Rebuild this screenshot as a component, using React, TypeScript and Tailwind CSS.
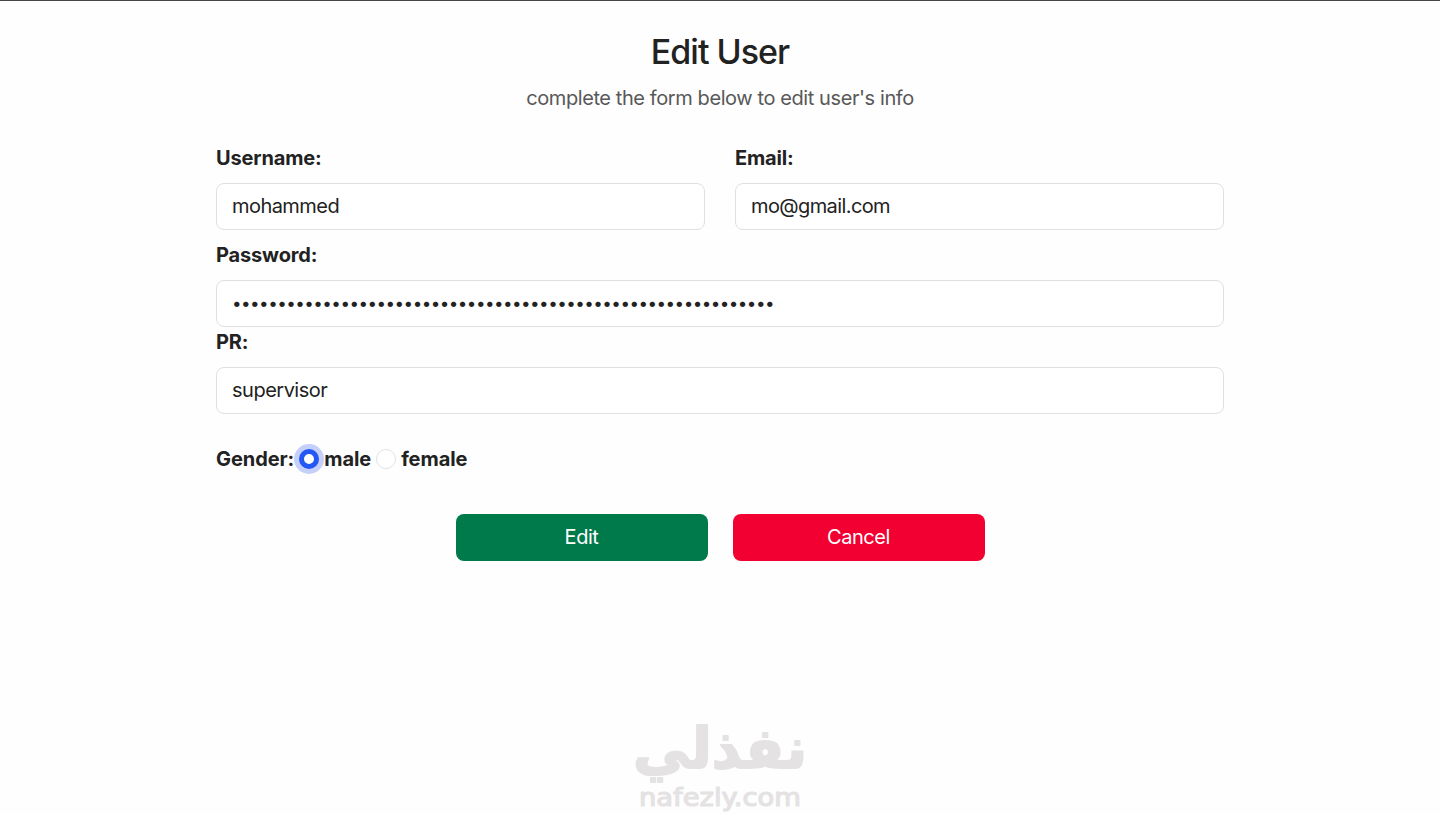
import { useState } from "react"

interface fieldProps {
    label: string,
    name: string,
    type: string,
    value: string,
    className: string
}

function Field(props: fieldProps) {
    const [value, setValue] = useState(props.value)
    return (
        <label className="block w-full">
            <span className="block h-[30px] leading-[30px] mb-2.5 font-bold tracking-[-0.15px]">{props.label}</span>
            <input
                className={`block w-full h-[47px] px-[15px] pb-0.5 border border-[#dee0e2] rounded-lg bg-white outline-none ${props.className}`}
                type={props.type}
                name={props.name}
                value={value}
                onChange={e => setValue(e.target.value)}
            />
        </label>
    )
}

function Watermark() {
    return (
        <svg className="w-[180px] h-[100px] overflow-visible fill-[#e4e2e3] stroke-[#e4e2e3]" viewBox="0 -6 180 100" strokeLinejoin="round" aria-label="nafezly">
            <text x="177" y="49" direction="rtl" textLength="174" lengthAdjust="spacingAndGlyphs" className="font-['DejaVu_Sans'] font-bold text-[56px]" strokeWidth="2">نفذلي</text>
            <text x="9" y="87" textLength="162" lengthAdjust="spacingAndGlyphs" className="font-['DejaVu_Sans'] text-[25px]" strokeWidth="1.2">nafezly.com</text>
        </svg>
    )
}

export default function App() {
    const [gender, setGender] = useState("male")
    return (
        <main className="w-full h-[814px] overflow-hidden flex flex-col items-center border-t border-[#454545] bg-[#fefefe] font-[Inter,sans-serif] text-xl text-[#222]">
            <h1 className="mt-[30px] h-[42px] leading-[42px] text-[34px] font-medium tracking-[-1px]">Edit User</h1>
            <p className="mt-2.5 h-[30px] leading-[30px] tracking-[-0.41px] text-[#585858]">complete the form below to edit user's info</p>

            <form className="w-[70%] mt-[30px]">
                <div className="flex gap-[30px] mb-2.5">
                    <Field label="Username:" name="username" type="text" value="mohammed" className="tracking-[-0.55px]" />
                    <Field label="Email:" name="email" type="text" value="mo@gmail.com" className="tracking-[-0.6px]" />
                </div>
                <Field label="Password:" name="password" type="password" value={"x".repeat(60)} className="text-[17px] tracking-[-0.53px]" />
                <Field label="PR:" name="pr" type="text" value="supervisor" className="tracking-[-0.5px]" />

                <div className="flex items-center h-[30px] mt-[30px] font-bold tracking-[-0.07px]">
                    <span>Gender:</span>
                    {["male", "female"].map(item => (
                        <label key={item} className="flex items-center">
                            <input
                                className="appearance-none size-5 mx-[5px] rounded-full border border-[#e0e2e4] bg-white checked:border-[5.5px] checked:border-[#2557f5] checked:ring-[5px] checked:ring-[#c5d0fa]"
                                type="radio"
                                name="gender"
                                checked={gender === item}
                                onChange={() => setGender(item)}
                            />
                            {item}
                        </label>
                    ))}
                </div>

                <div className="flex justify-center gap-[25px] mt-10 text-white tracking-[-0.45px]">
                    <button type="button" className="w-1/4 h-[47px] pb-0.5 rounded-lg bg-[#007a4b]">Edit</button>
                    <button type="button" className="w-1/4 h-[47px] pb-0.5 rounded-lg bg-[#f20031]">Cancel</button>
                </div>
            </form>

            <div className="mt-[152px]">
                <Watermark />
            </div>
        </main>
    )
}
